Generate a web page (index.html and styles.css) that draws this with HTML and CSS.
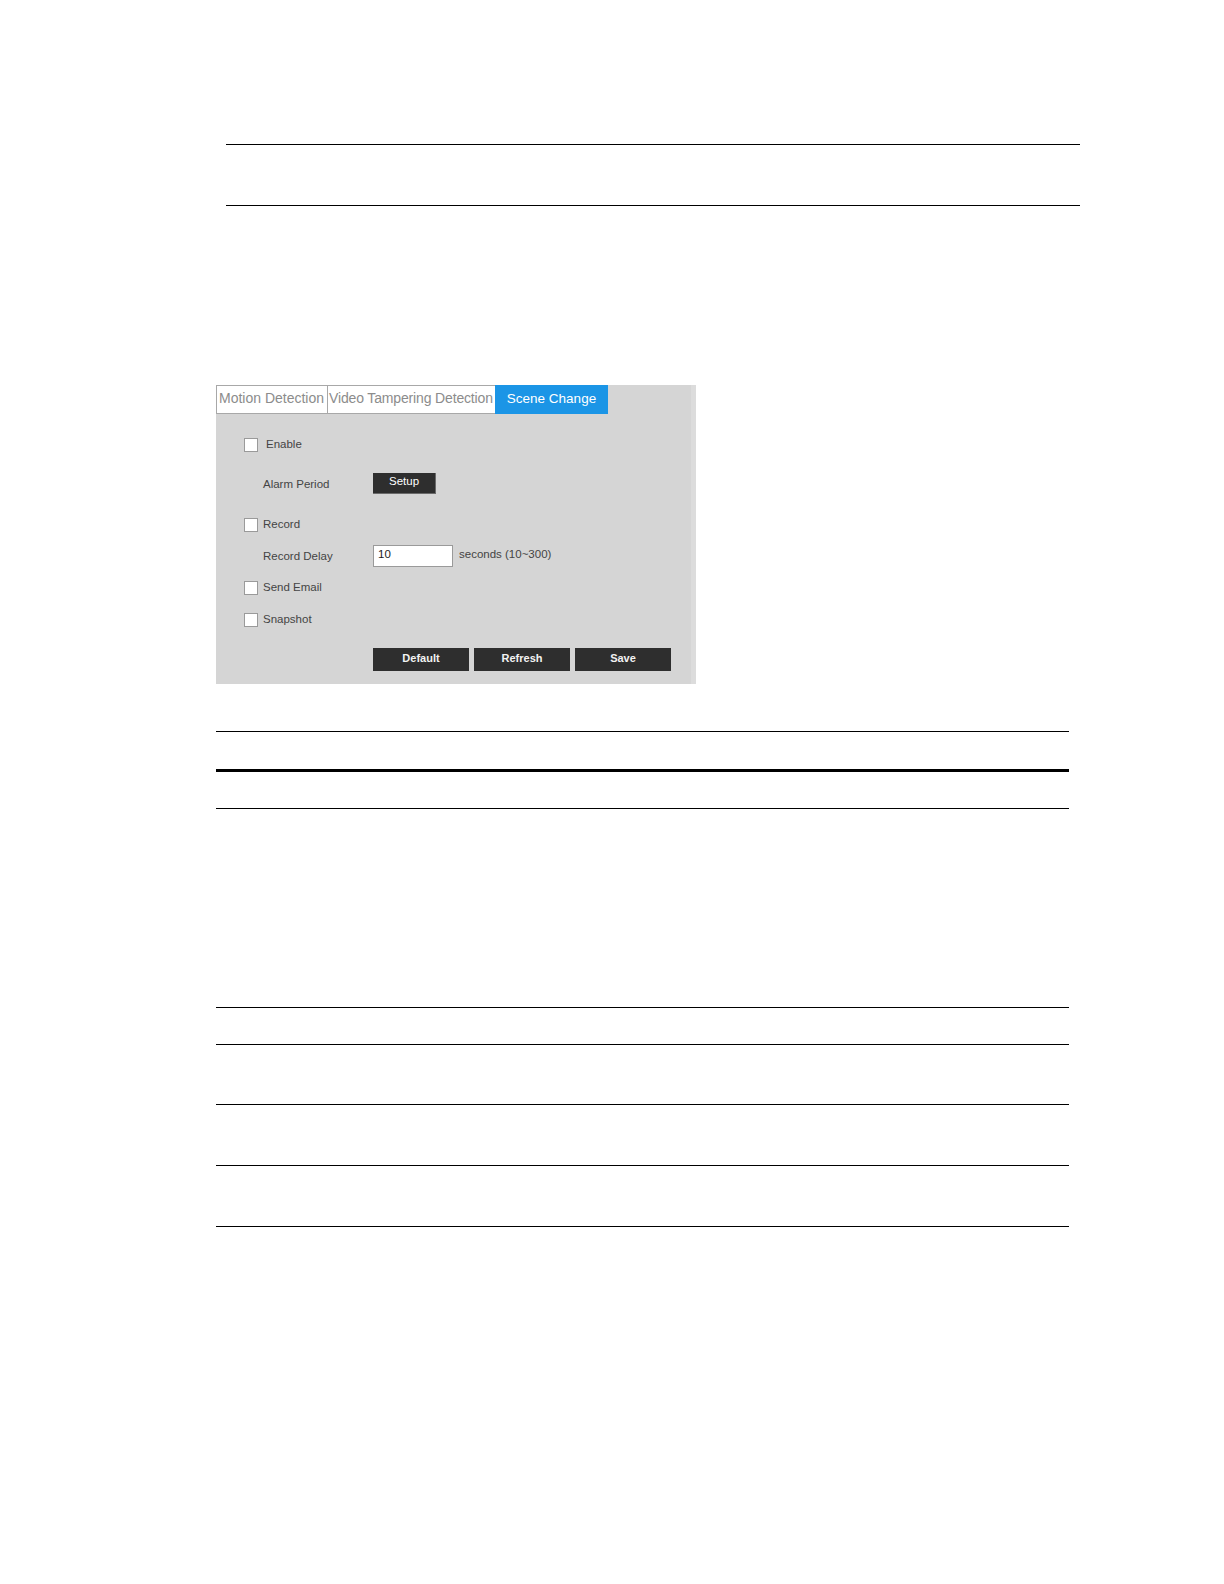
FILE: index.html
```html
<!DOCTYPE html>
<html lang="en">
<head>
<meta charset="utf-8">
<title>Scene Change</title>
<link rel="stylesheet" href="styles.css">
</head>
<body>
<div class="page">
  <div class="rule-box"></div>

  <div class="panel">
    <div class="tabs">
      <div class="tab tab-motion">Motion Detection</div>
      <div class="tab tab-tamper">Video Tampering Detection</div>
      <div class="tab tab-active">Scene Change</div>
    </div>
    <div class="panel-body">
      <div class="row row-enable">
        <span class="check"></span><span class="label label-enable">Enable</span>
      </div>
      <div class="row row-alarm">
        <span class="field-label">Alarm Period</span>
        <button class="btn btn-setup">Setup</button>
      </div>
      <div class="row row-record">
        <span class="check"></span><span class="label">Record</span>
      </div>
      <div class="row row-delay">
        <span class="field-label">Record Delay</span>
        <div class="input">10</div>
        <span class="hint">seconds (10~300)</span>
      </div>
      <div class="row row-email">
        <span class="check"></span><span class="label">Send Email</span>
      </div>
      <div class="row row-snap">
        <span class="check"></span><span class="label">Snapshot</span>
      </div>
      <div class="row row-actions">
        <button class="btn btn-action">Default</button>
        <button class="btn btn-action">Refresh</button>
        <button class="btn btn-action">Save</button>
      </div>
    </div>
  </div>

  <div class="table">
    <div class="trow trow-head"></div>
    <div class="trow trow-h36"></div>
    <div class="trow trow-tall"></div>
    <div class="trow trow-h36"></div>
    <div class="trow trow-h59"></div>
    <div class="trow trow-h60"></div>
    <div class="trow trow-h60"></div>
  </div>
</div>
</body>
</html>
```

FILE: styles.css
```css
* { box-sizing: border-box; }

html, body {
  margin: 0;
  padding: 0;
  background: #ffffff;
}

body {
  font-family: "Liberation Sans", Arial, sans-serif;
  color: #000;
}

.page {
  width: 1224px;
  min-height: 1584px;
  padding-top: 144px;
}

.rule-box {
  margin-left: 226px;
  width: 854px;
  height: 62px;
  border-top: 1px solid #000;
  border-bottom: 1px solid #000;
}

/* ---------- settings panel ---------- */
.panel {
  margin-top: 179px;
  margin-left: 216px;
  width: 480px;
  background: #d5d5d5;
  border-right: 5px solid #dcdcdc;
}

.tabs {
  display: flex;
  height: 29px;
  background: #d5d5d5;
}

.tab {
  height: 29px;
  display: flex;
  align-items: center;
  font-size: 14px;
  color: #8c8c8c;
  background: #ffffff;
  white-space: nowrap;
  padding-bottom: 3px;
}

.tab-motion {
  width: 112px;
  padding-left: 2px;
  border: 1px solid #a8a8a8;
}

.tab-tamper {
  width: 167px;
  padding-left: 1px;
  letter-spacing: -0.15px;
  border-top: 1px solid #a8a8a8;
  border-bottom: 1px solid #a8a8a8;
  border-right: none;
}

.tab-active {
  width: 113px;
  justify-content: center;
  background: #1b95e6;
  color: #ffffff;
  font-size: 13.5px;
}

.panel-body {
  display: flex;
  flex-direction: column;
  padding-left: 28px;
  padding-bottom: 13px;
}

.row {
  display: flex;
  align-items: center;
}

.row-enable  { height: 14px; margin-top: 24px; }
.row-alarm   { height: 21px; margin-top: 21px; }
.row-record  { height: 14px; margin-top: 24px; }
.row-delay   { height: 22px; margin-top: 13px; }
.row-email   { height: 14px; margin-top: 14px; }
.row-snap    { height: 14px; margin-top: 18px; }
.row-actions { height: 23px; margin-top: 21px; padding-left: 129px; gap: 5px; }

.check {
  width: 14px;
  height: 14px;
  background: #ffffff;
  border: 1px solid #9a9a9a;
  flex: none;
}

.label {
  margin-left: 5px;
  font-size: 11.5px;
  color: #444;
  margin-top: -2px;
}

.label-enable {
  margin-left: 8px;
  margin-top: -3px;
}

.field-label {
  width: 110px;
  margin-left: 19px;
  font-size: 11.5px;
  color: #444;
}

.btn {
  border: none;
  padding: 0;
  margin: 0;
  font-family: "Liberation Sans", Arial, sans-serif;
  color: #ffffff;
  background: #2e2e2e;
  cursor: pointer;
}

.btn-setup {
  width: 63px;
  height: 21px;
  font-size: 11.5px;
  padding-bottom: 4px;
  border-right: 1px solid #6a6a6a;
  border-bottom: 1px solid #6a6a6a;
}

.btn-action {
  width: 96px;
  height: 23px;
  font-size: 11px;
  font-weight: bold;
  color: #f2f2f2;
  padding-bottom: 3px;
}

.input {
  width: 80px;
  height: 22px;
  background: #ffffff;
  border: 1px solid #9a9a9a;
  font-size: 11.5px;
  color: #222;
  padding-left: 4px;
  padding-top: 2px;
}

.hint {
  margin-left: 6px;
  font-size: 11.5px;
  color: #444;
  margin-top: -4px;
}

/* ---------- table rules ---------- */
.table {
  margin-top: 47px;
  margin-left: 216px;
  width: 853px;
  border-top: 1px solid #000;
}

.trow {
  border-bottom: 1px solid #000;
}

.trow-head { height: 40px; border-bottom: 3px solid #000; }
.trow-h36  { height: 37px; }
.trow-tall { height: 199px; }
.trow-h59  { height: 60px; }
.trow-h60  { height: 61px; }
```
